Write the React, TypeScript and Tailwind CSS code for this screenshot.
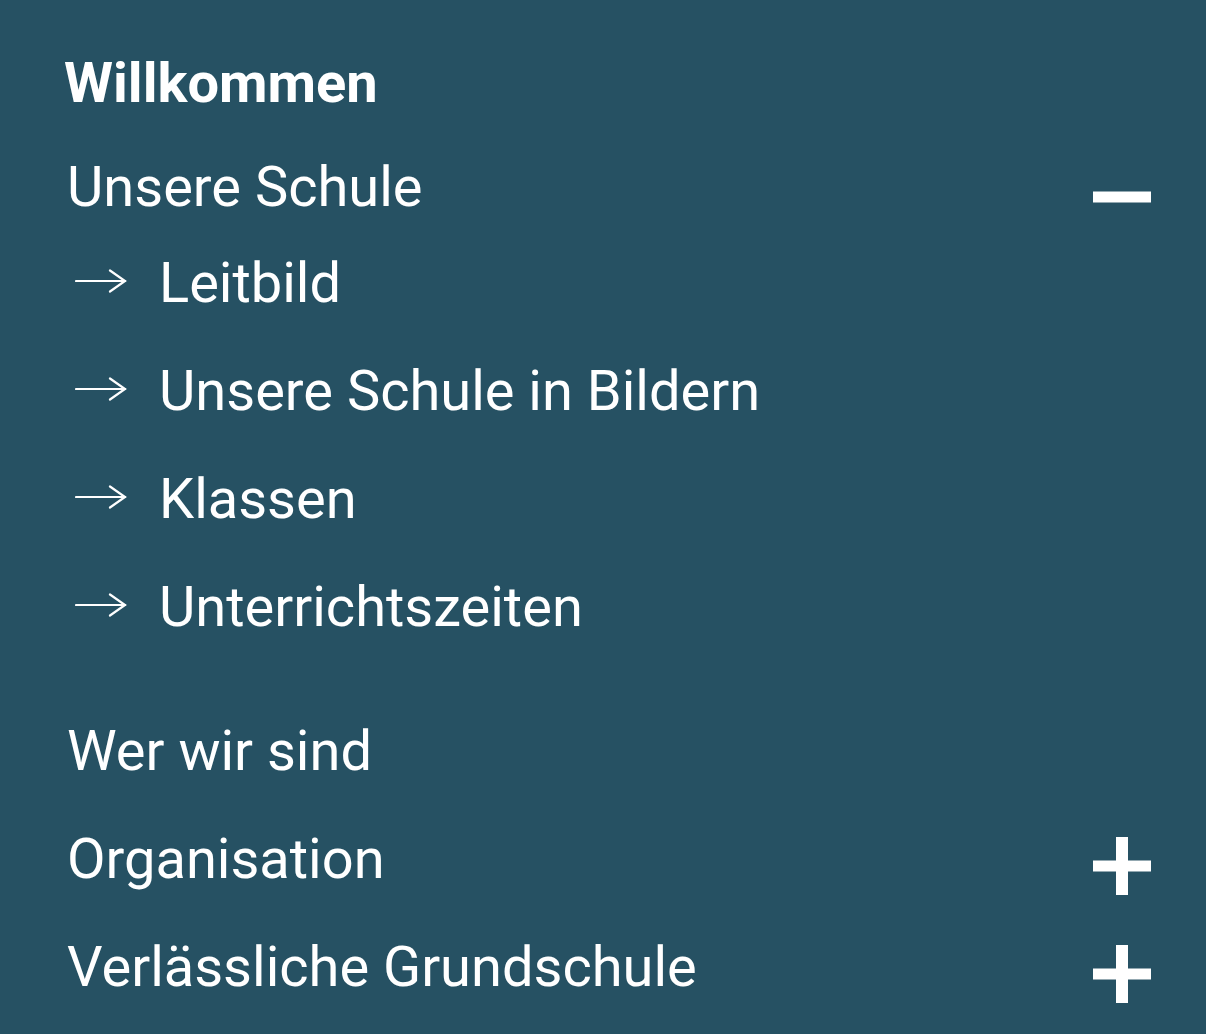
import { Fragment } from 'react';

type NavItem = {
  label: string;
  children?: string[];
  open?: boolean;
  expandable?: boolean;
};

const items: NavItem[] = [
  {
    label: 'Unsere Schule',
    open: true,
    expandable: true,
    children: ['Leitbild', 'Unsere Schule in Bildern', 'Klassen', 'Unterrichtszeiten'],
  },
  { label: 'Wer wir sind' },
  { label: 'Organisation', expandable: true },
  { label: 'Verlässliche Grundschule', expandable: true },
];

function Toggle({ open }: { open?: boolean }) {
  return (
    <svg width="58" height="58" viewBox="0 0 58 58" className="shrink-0" fill="#ffffff">
      <rect x="0" y="23.5" width="58" height="11" />
      {!open && <rect x="23" y="0" width="12" height="58" />}
    </svg>
  );
}

function Arrow() {
  return (
    <svg width="52" height="24" viewBox="0 0 52 24" fill="none" stroke="#ffffff" strokeWidth="2.2" strokeLinecap="round">
      <path d="M1 12H50" />
      <path d="M35 1.5L50 12L35 22.5" />
    </svg>
  );
}

export default function App() {
  return (
    <div className="min-h-[1034px] w-full bg-[#265163] text-white font-['Roboto','Liberation_Sans',sans-serif]">
      <nav className="pl-[67px] pr-[55px] pt-[33px]">
        <div className="text-[56px] font-bold leading-[100px] -ml-[3px]">Willkommen</div>
        {items.map((item) => (
          <Fragment key={item.label}>
            <div className="flex items-center justify-between h-[108px]">
              <span className="text-[56px] leading-[108px]">{item.label}</span>
              {item.expandable && (
                <div className={item.open ? 'mt-[20px]' : 'mt-[14px]'}>
                  <Toggle open={item.open} />
                </div>
              )}
            </div>
            {item.open && item.children && (
              <ul className="-mt-[12px] pb-[36px]">
                {item.children.map((child) => (
                  <li key={child} className="flex items-center h-[108px] text-[56px] leading-[108px]">
                    <span className="w-[92px] shrink-0 pl-[8px] mt-[-4px]">
                      <Arrow />
                    </span>
                    <span>{child}</span>
                  </li>
                ))}
              </ul>
            )}
          </Fragment>
        ))}
      </nav>
    </div>
  );
}
